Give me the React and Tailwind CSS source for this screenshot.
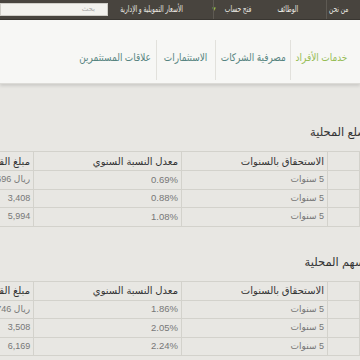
import React from "react";

const font = { fontFamily: '"Liberation Sans", "DejaVu Sans", sans-serif' };

function AmountCell({ amount, kind }) {
  return (
    <td className="border border-[#d3d2cc] text-[9px] text-[#777] pr-[3px] whitespace-nowrap overflow-hidden">
      {kind === 0 ? (
        <div dir="ltr" className="text-right">ريال {amount}</div>
      ) : (
        <div dir="ltr" className="text-right mr-[-19px]">{amount} ريال</div>
      )}
    </td>
  );
}

function Table({ rows }) {
  return (
    <div className="flex justify-start">
      <table className="border-collapse shrink-0 w-[406px] table-fixed text-right">
        <colgroup>
          <col className="w-[32px]" />
          <col className="w-[146px]" />
          <col className="w-[148px]" />
          <col className="w-[80px]" />
        </colgroup>
        <thead>
          <tr className="h-[19px]">
            <th className="border border-[#d3d2cc] font-normal"></th>
            <th className="border border-[#d3d2cc] font-normal text-[10px] text-[#333] px-[3px]">الاستحقاق بالسنوات</th>
            <th className="border border-[#d3d2cc] font-normal text-[10px] text-[#333] px-[3px]">معدل النسبة السنوي</th>
            <th className="border border-[#d3d2cc] font-normal text-[10px] text-[#333] px-[3px] whitespace-nowrap overflow-hidden">مبلغ القسط الشهري</th>
          </tr>
        </thead>
        <tbody>
          {rows.map((r, i) => (
            <tr key={i} className="h-[18.5px]">
              <td className="border border-[#d3d2cc]"></td>
              <td className="border border-[#d3d2cc] text-[9px] text-[#777] px-[3px]">5 سنوات</td>
              <td className="border border-[#d3d2cc] text-[9.5px] text-[#777] px-[3px]">{r[0]}</td>
              <AmountCell amount={r[1]} kind={i === 0 ? 0 : 1} />
            </tr>
          ))}
        </tbody>
      </table>
    </div>
  );
}

function TopItem({ w, pr, children }) {
  return (
    <div className={`${w} ${pr} flex-none flex items-center justify-center whitespace-nowrap`}>
      <span className="inline-block scale-x-[0.66]">{children}</span>
    </div>
  );
}

function NavItem({ w, pr, active, children }) {
  return (
    <div className={`${w} ${pr} flex-none flex justify-center whitespace-nowrap ${active ? "text-[#96bd55]" : ""}`}>
      <span className="inline-block scale-x-[0.85]">{children}</span>
    </div>
  );
}

export default function App() {
  return (
    <div dir="rtl" style={font} className="w-[360px] h-[360px] overflow-hidden bg-[#e8e7e3]">
      {/* top bar */}
      <div className="h-[20px] bg-[#48443e] flex items-stretch text-[9px] text-[#ebe9e3] border-b border-[#3a3732]">
        <TopItem w="w-[33px]" pr="pr-[9px]">من نحن</TopItem>
        <div className="w-px flex-none bg-[#5e5a53]"></div>
        <TopItem w="w-[56px]" pr="pr-[20px]">الوظائف</TopItem>
        <div className="w-[56px] pr-[15px] flex-none flex items-center justify-center whitespace-nowrap gap-[1px]">
          <span className="inline-block scale-x-[0.66]">فتح حساب</span>
          <span className="text-[#8fc04a] text-[6px]">▼</span>
        </div>
        <div className="w-px flex-none bg-[#5e5a53]"></div>
        <TopItem w="w-[105px]" pr="pr-[17px]">الأسعار التمويلية و الإدارية</TopItem>
        <div className="flex-1 flex items-center">
          <div className="w-full h-[13px] bg-[#f2f1ed] border border-[#cfcdc7] flex items-center pr-[12px] text-[7px] text-[#aaa]">بحث</div>
        </div>
      </div>
      {/* nav */}
      <div className="h-[64px] bg-[#f7f7f5] shadow-[0_2px_3px_rgba(0,0,0,0.12)] border-b border-[#dcdbd7] flex items-start text-[10.5px] text-[#568480]">
        <NavItem w="w-[69px] mt-[30px]" pr="pr-[8px]" active>خدمات الأفراد</NavItem>
        <div className="w-px h-[40px] bg-[#e2e1dc] mt-[20px] flex-none"></div>
        <NavItem w="w-[74px] mt-[30px]" pr="">مصرفية الشركات</NavItem>
        <div className="w-px h-[40px] bg-[#e2e1dc] mt-[20px] flex-none"></div>
        <NavItem w="w-[58px] mt-[30px]" pr="">الاستثمارات</NavItem>
        <div className="w-px h-[40px] bg-[#e2e1dc] mt-[20px] flex-none"></div>
        <NavItem w="w-[82px] mt-[30px]" pr="">علاقات المستثمرين</NavItem>
      </div>
      {/* content */}
      <div className="pt-[41px]">
        <div className="mr-[-50px] text-[11.5px] text-[#333] whitespace-nowrap h-[14px] leading-[14px]">مرابحة السلع المحلية</div>
        <div className="h-[12px]"></div>
        <Table rows={[["0.69%", "1,696"], ["0.88%", "3,408"], ["1.08%", "5,994"]]} />
        <div className="h-[28px]"></div>
        <div className="mr-[-50px] text-[11.5px] text-[#333] whitespace-nowrap h-[14px] leading-[14px]">مرابحة الأسهم المحلية</div>
        <div className="h-[12px]"></div>
        <Table rows={[["1.86%", "1,746"], ["2.05%", "3,508"], ["2.24%", "6,169"]]} />
      </div>
    </div>
  );
}
